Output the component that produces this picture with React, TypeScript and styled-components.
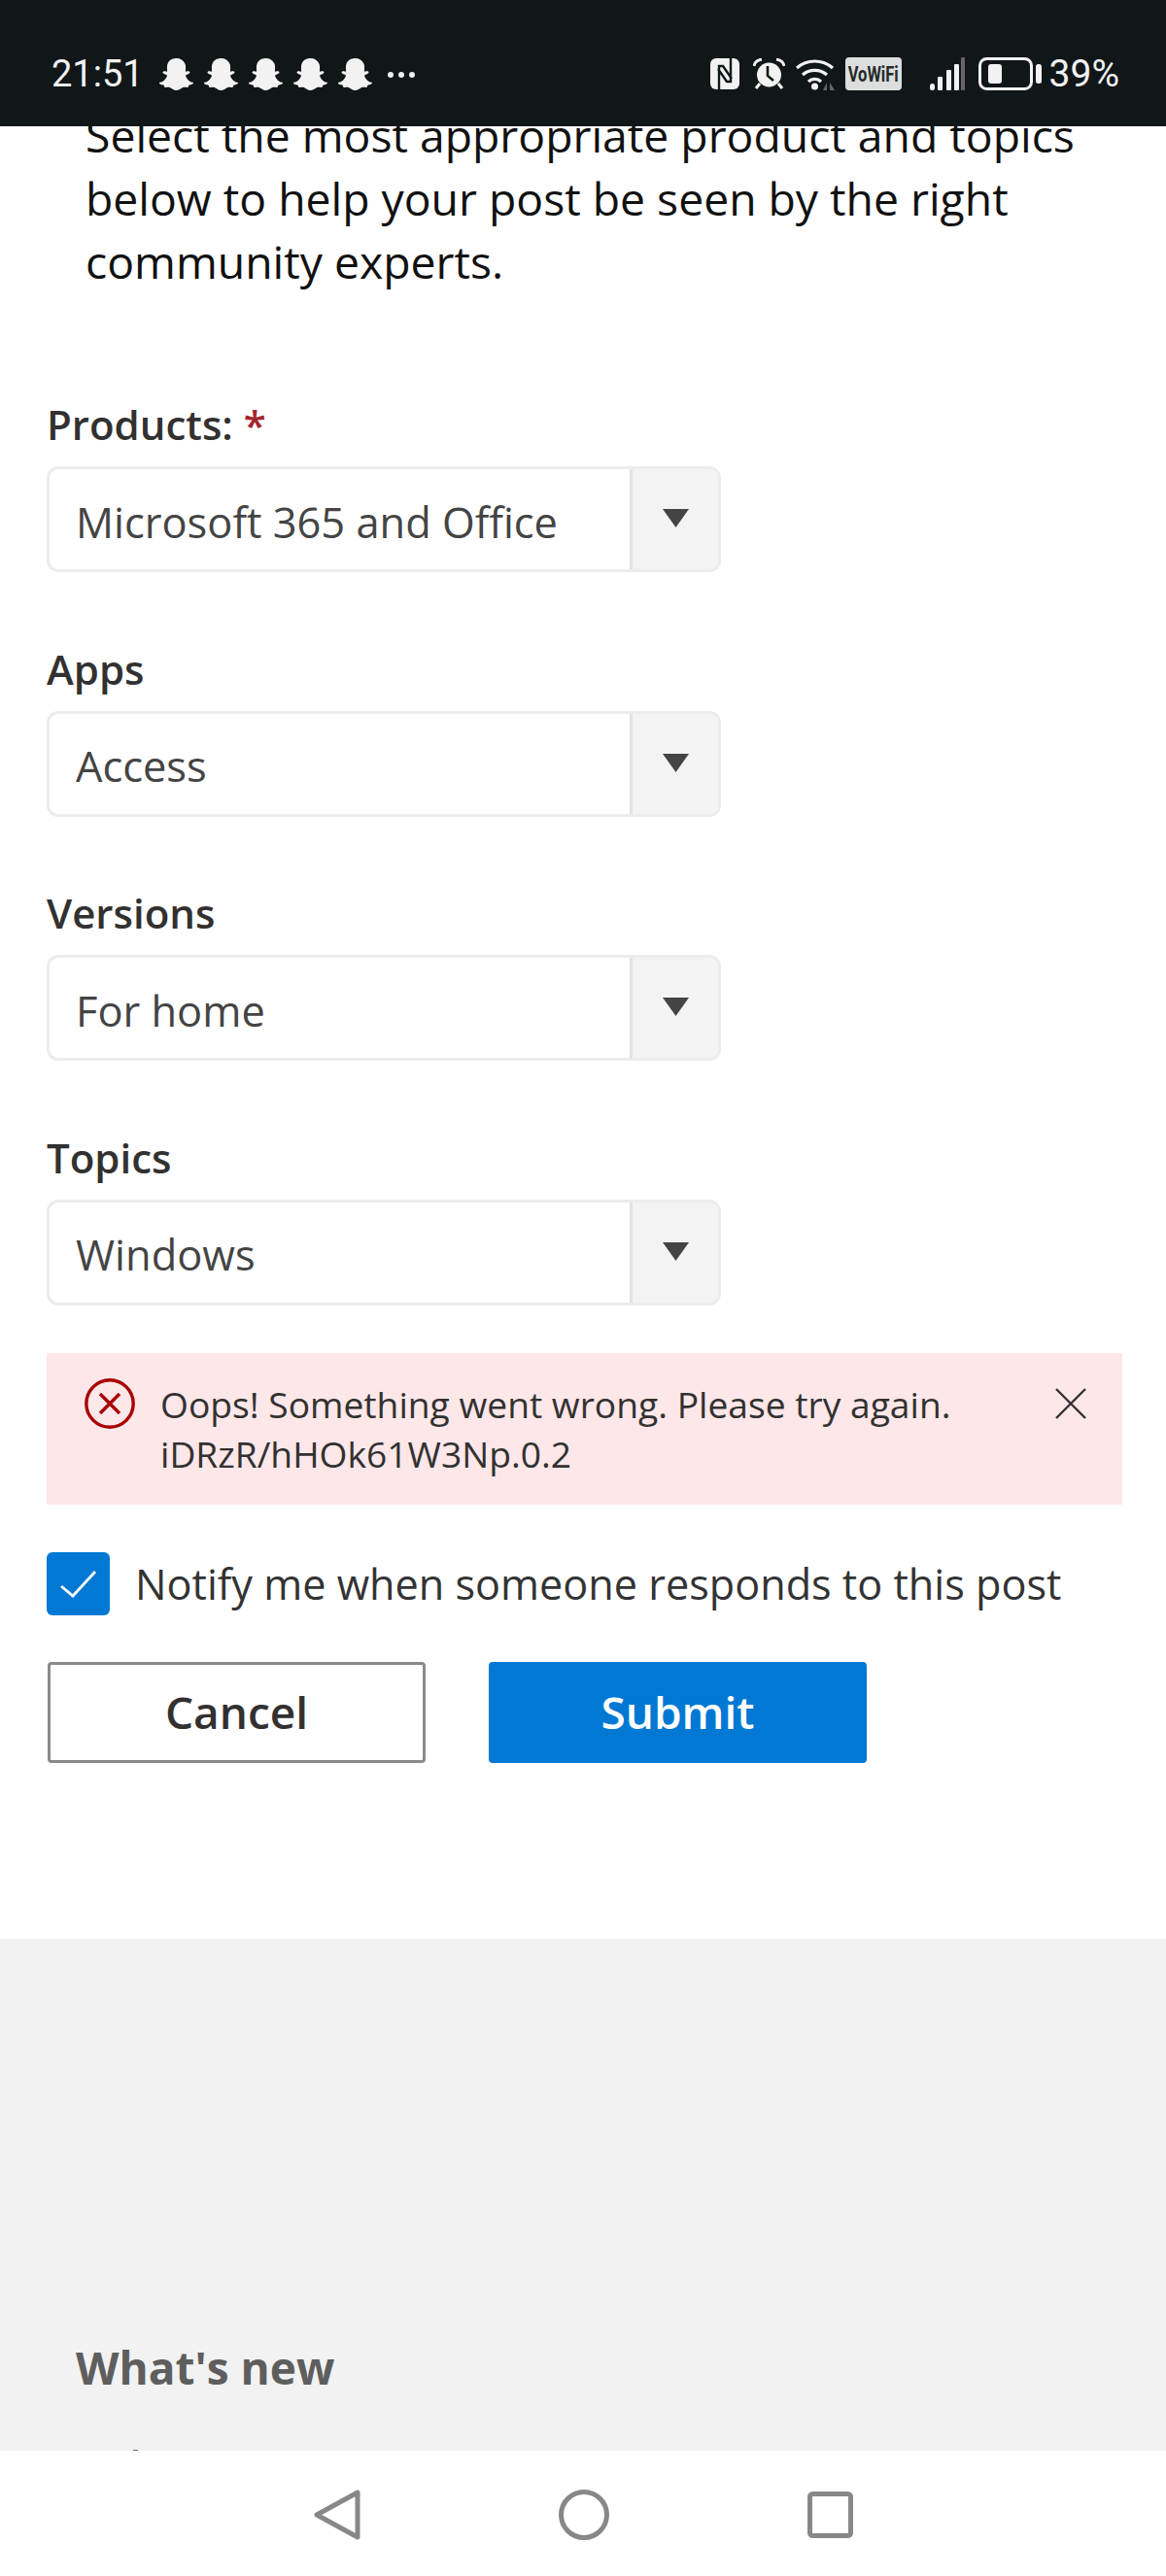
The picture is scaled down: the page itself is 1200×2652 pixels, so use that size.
import React from "react";
import styled, { createGlobalStyle } from "styled-components";
import { FaSnapchatGhost } from "react-icons/fa";

const Global = createGlobalStyle`
  html, body { margin: 0; padding: 0; background: #fff; }
  * { box-sizing: border-box; }
`;
const Phone = styled.div`
  width: 1200px; height: 2652px; display: flex; flex-direction: column; overflow: hidden;
  font-family: "Open Sans", "Noto Sans", sans-serif; background: #fff;
`;
const StatusBar = styled.header`
  height: 130px; flex: none; background: #111719; color: #f2f2f2; display: flex; align-items: center;
  justify-content: space-between; padding: 22px 48px 0 53px; position: relative; z-index: 2;
  font-family: Roboto, sans-serif;
`;
const StatusGroup = styled.div`display: flex; align-items: center;`;
const Clock = styled.span`font-size: 38px; margin-right: 16px;`;
const Ghosts = styled.div`display: flex; gap: 11px; font-size: 35px; line-height: 0;`;
const MoreDots = styled.svg`margin-left: 15px; margin-top: 2px;`;
const NfcIcon = styled.svg`margin-right: 14px;`;
const AlarmIcon = styled.svg`margin-right: 11px;`;
const WifiIcon = styled.svg`margin-right: 10px;`;
const VoWifi = styled.span`
  width: 58px; height: 34px; background: #dcdfde; color: #252929; border-radius: 4px; margin-right: 29px;
  display: flex; align-items: center; justify-content: center; font-size: 22px; font-weight: 700; overflow: hidden;
`;
const VoWifiText = styled.span`display: inline-block; transform: scaleX(.75); white-space: nowrap;`;
const SignalIcon = styled.svg`margin-right: 14px;`;
const BatteryIcon = styled.svg`margin-right: 8px;`;
const Percent = styled.span`font-size: 39px; font-weight: 400;`;
const Main = styled.main`flex: 1; min-height: 0; overflow: hidden; display: flex; flex-direction: column;`;
const Form = styled.section`flex: none; padding: 0 45px 181px 48px; margin-top: -23px;`;
const Intro = styled.p`
  margin: 0 0 106px 40px; font-size: 46.3px; line-height: 65px; color: #111; width: 1060px;
`;
const Field = styled.div`& + & { margin-top: 70.5px; }`;
const Label = styled.div`font-size: 42px; font-weight: 600; color: #323130; line-height: 58px; margin-bottom: 14px;`;
const Req = styled.span`color: #a4262c; margin-left: 11px;`;
const Select = styled.div`
  width: 694px; height: 109px; border: 3px solid #ececec; border-radius: 12px; display: flex; overflow: hidden;
`;
const Value = styled.div`flex: 1; padding: 5px 0 0 27px; font-size: 43.4px; color: #444; display: flex; align-items: center;`;
const Arrow = styled.div`
  width: 91px; background: #f3f3f3; border-left: 3px solid #e2e2e2; display: flex; justify-content: center; padding-top: 41px;
`;
const Alert = styled.div`
  width: 1107px; height: 156px; background: #fde7e9; display: flex; padding: 26px 37px 0 39px; margin-top: 49.5px; color: #323130;
`;
const AlertText = styled.div`flex: 1; font-size: 37.2px; line-height: 51px; padding: 1px 0 0 26px;`;
const CloseIcon = styled.svg`margin-top: 10px;`;
const CheckRow = styled.label`display: flex; align-items: center; gap: 26px; margin-top: 49px; color: #333; font-size: 43.2px;`;
const Box = styled.span`width: 65px; height: 65px; border-radius: 6px; background: #0078d4; display: block; flex: none;`;
const Buttons = styled.div`display: flex; gap: 65px; margin: 48px 0 0 1px;`;
const Button = styled.button<{ $primary?: boolean }>`
  width: 389px; height: 104px; border-radius: 4px; font: 600 46px "Open Sans", sans-serif; padding: 0 0 2px;
  background: ${p => (p.$primary ? "#0078d4" : "#fff")}; color: ${p => (p.$primary ? "#fff" : "#323130")};
  border: ${p => (p.$primary ? "none" : "3px solid #8a8a8a")};
`;
const Footer = styled.footer`flex: 1; min-height: 0; background: #f2f2f2; padding: 410px 0 0 78px; overflow: hidden;`;
const FooterTitle = styled.h2`margin: 0; font-size: 46px; line-height: 62px; font-weight: 700; color: #5e5e5e;`;
const FooterPeek = styled.div`width: 5px; height: 2px; margin: 54px 0 0 59px; background: #666;`;
const Nav = styled.nav`height: 129px; flex: none; background: #fff; display: flex; justify-content: center; align-items: center; gap: 204px; padding: 2px 0 0;`;

const fields = [
  { label: "Products:", value: "Microsoft 365 and Office", required: true },
  { label: "Apps", value: "Access" },
  { label: "Versions", value: "For home" },
  { label: "Topics", value: "Windows" },
];

export default function App() {
  return (
    <Phone>
      <Global />
      <StatusBar>
        <StatusGroup>
          <Clock>21:51</Clock>
          <Ghosts>{[0, 1, 2, 3, 4].map(i => <FaSnapchatGhost key={i} />)}</Ghosts>
          <MoreDots width="30" height="8" viewBox="0 0 30 8">
            <circle cx="4" cy="4" r="3" fill="#eee" />
            <circle cx="15" cy="4" r="3" fill="#eee" />
            <circle cx="26" cy="4" r="3" fill="#eee" />
          </MoreDots>
        </StatusGroup>
        <StatusGroup>
          <NfcIcon width="30" height="32" viewBox="0 0 30 32">
            <rect width="30" height="32" rx="6" fill="#f2f2f2" />
            <path d="M9 32V8h4l9 13M21 0v24h-4L8 11" fill="none" stroke="#111719" strokeWidth="2.4" />
          </NfcIcon>
          <AlarmIcon width="33" height="32" viewBox="0 0 33 32">
            <circle cx="16.5" cy="17" r="12.5" fill="#f2f2f2" />
            <path d="M15 8v10l6 5" fill="none" stroke="#111719" strokeWidth="2.6" />
            <path d="M1 8q1-6 8-7M32 8q-1-6-8-7" fill="none" stroke="#f2f2f2" strokeWidth="2.8" />
            <path d="M7 26l-4 5M26 26l4 5" stroke="#f2f2f2" strokeWidth="3" />
          </AlarmIcon>
          <WifiIcon width="41" height="34" viewBox="0 0 41 34">
            <path d="M1 11a28 28 0 0 1 37 0M7 18a19 19 0 0 1 25 0M13 25a9.5 9.5 0 0 1 13 0" fill="none" stroke="#f2f2f2" strokeWidth="3.2" />
            <circle cx="19.5" cy="30" r="3.5" fill="#f2f2f2" />
            <path d="M28 34l4-8v8zM35 26l5 8h-5z" fill="#666" />
          </WifiIcon>
          <VoWifi><VoWifiText>VoWiFi</VoWifiText></VoWifi>
          <SignalIcon width="36" height="34" viewBox="0 0 36 34">
            <rect x="0" y="27" width="5" height="7" rx="2.5" fill="#f2f2f2" />
            <rect x="8" y="20" width="5" height="14" rx="1" fill="#f2f2f2" />
            <rect x="17" y="13" width="5" height="21" rx="1" fill="#f2f2f2" />
            <rect x="25" y="7" width="5" height="27" rx="1" fill="#f2f2f2" />
            <rect x="32" y="0" width="4" height="34" rx="1" fill="#666" />
          </SignalIcon>
          <BatteryIcon width="65" height="34" viewBox="0 0 65 34">
            <rect x="1.5" y="1.5" width="53" height="31" rx="7" fill="none" stroke="#f2f2f2" strokeWidth="3" />
            <rect x="10" y="7" width="14" height="20" rx="3" fill="#f2f2f2" />
            <rect x="59" y="7" width="6" height="20" rx="2.5" fill="#f2f2f2" />
          </BatteryIcon>
          <Percent>39%</Percent>
        </StatusGroup>
      </StatusBar>
      <Main>
        <Form>
          <Intro>Select the most appropriate product and topics below to help your post be seen by the right community experts.</Intro>
          {fields.map(f => (
            <Field key={f.label}>
              <Label>{f.label}{f.required && <Req>*</Req>}</Label>
              <Select>
                <Value>{f.value}</Value>
                <Arrow>
                  <svg width="27" height="19" viewBox="0 0 27 19"><path d="M0 0h27L13.5 19z" fill="#444" /></svg>
                </Arrow>
              </Select>
            </Field>
          ))}
          <Alert>
            <svg width="52" height="52" viewBox="0 0 52 52">
              <circle cx="26" cy="26" r="24.2" fill="none" stroke="#a80000" strokeWidth="3.4" />
              <path d="M16 16l20 20M36 16L16 36" stroke="#a80000" strokeWidth="3.4" />
            </svg>
            <AlertText>Oops! Something went wrong. Please try again.<br />iDRzR/hHOk61W3Np.0.2</AlertText>
            <CloseIcon width="32" height="32" viewBox="0 0 32 32">
              <path d="M1 1l30 30M31 1L1 31" stroke="#323130" strokeWidth="2.4" />
            </CloseIcon>
          </Alert>
          <CheckRow>
            <Box>
              <svg width="65" height="65" viewBox="0 0 65 65"><path d="M15 35l12 10L50 20" fill="none" stroke="#fff" strokeWidth="2.8" /></svg>
            </Box>
            Notify me when someone responds to this post
          </CheckRow>
          <Buttons>
            <Button>Cancel</Button>
            <Button $primary>Submit</Button>
          </Buttons>
        </Form>
        <Footer>
          <FooterTitle>What's new</FooterTitle>
          <FooterPeek />
        </Footer>
      </Main>
      <Nav>
        <svg width="48" height="52" viewBox="0 0 48 52"><path d="M45 3L3 26l42 23z" fill="none" stroke="#888" strokeWidth="5" strokeLinejoin="round" /></svg>
        <svg width="52" height="52" viewBox="0 0 52 52"><circle cx="26" cy="26" r="23.5" fill="none" stroke="#888" strokeWidth="5" /></svg>
        <svg width="47" height="48" viewBox="0 0 47 48"><rect x="2.5" y="2.5" width="42" height="43" rx="3" fill="none" stroke="#888" strokeWidth="5" /></svg>
      </Nav>
    </Phone>
  );
}
